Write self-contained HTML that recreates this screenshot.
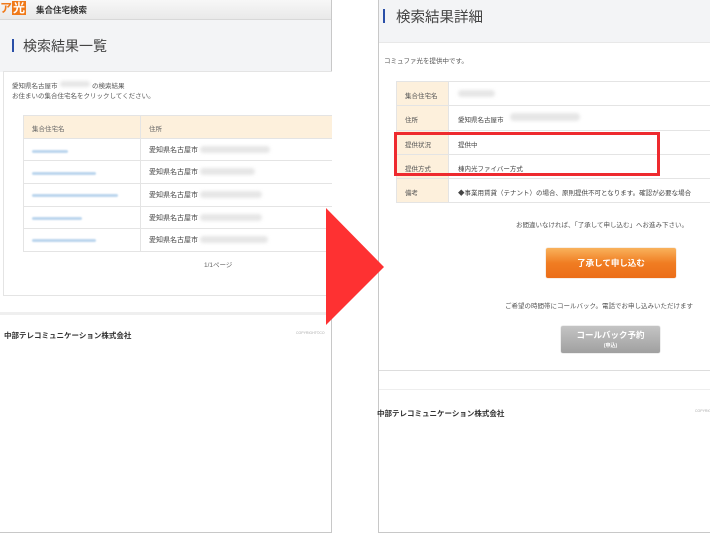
<!DOCTYPE html>
<html><head><meta charset="utf-8"><style>
*{margin:0;padding:0;box-sizing:border-box}
body{width:710px;height:533px;background:#fff;position:relative;overflow:hidden;font-family:"Liberation Sans","Noto Sans CJK JP",sans-serif;color:#333}
.a{position:absolute}
.t{position:absolute;white-space:nowrap}
.blur{position:absolute;background:#e6e6e6;border-radius:4px;filter:blur(1.5px)}
.link{position:absolute;height:3px;background:#bcd6ee;border-radius:2px;filter:blur(.8px)}
</style></head><body>
<!-- LEFT PANEL -->
<div class="a" style="left:0;top:0;width:332px;height:533px;border-right:1px solid #c8c8c8;border-bottom:1px solid #c8c8c8;background:#fff"></div>
<div class="a" style="left:0;top:0;width:331px;height:20px;background:linear-gradient(#f7f7f7,#e9e9e9);border-bottom:1px solid #d8d8d8"></div>
<div class="t" style="left:0;top:1px;font-size:12px;font-weight:bold;color:#f07a1a;line-height:14px">ア<span style="background:#f07a1a;color:#fff;padding:0 1px">光</span></div>
<div class="t" style="left:36px;top:4px;font-size:8.5px;font-weight:bold;color:#333">集合住宅検索</div>
<div class="a" style="left:0;top:20px;width:331px;height:52px;background:#f3f4f6"></div>
<div class="a" style="left:12px;top:39px;width:2px;height:13px;background:#2a4fa8"></div>
<div class="t" style="left:23px;top:36px;font-size:14px;color:#444">検索結果一覧</div>
<div class="a" style="left:3px;top:71px;width:329px;height:225px;background:#fff;border:1px solid #e4e4e4;border-right:none"></div>
<div class="t" style="left:12px;top:80px;font-size:6.5px;color:#555">愛知県名古屋市</div>
<div class="blur" style="left:60px;top:81px;width:30px;height:6px"></div>
<div class="t" style="left:92px;top:80px;font-size:6.5px;color:#555">の検索結果</div>
<div class="t" style="left:12px;top:90px;font-size:6.5px;color:#555">お住まいの集合住宅名をクリックしてください。</div>
<div class="a" style="left:23px;top:115px;width:309px;height:137px;border:1px solid #e4e4e4;border-right:none"></div>
<div class="a" style="left:24px;top:116px;width:308px;height:22px;background:#fdf0dc"></div>
<div class="a" style="left:140px;top:116px;width:1px;height:135px;background:#e4e4e4"></div>
<div class="t" style="left:32px;top:123px;font-size:6.5px;color:#666">集合住宅名</div>
<div class="t" style="left:149px;top:123px;font-size:6.5px;color:#666">住所</div>
<div class="a" style="left:24px;top:138px;width:308px;height:1px;background:#e4e4e4"></div>
<div class="a" style="left:24px;top:160px;width:308px;height:1px;background:#e4e4e4"></div>
<div class="a" style="left:24px;top:183px;width:308px;height:1px;background:#e4e4e4"></div>
<div class="a" style="left:24px;top:206px;width:308px;height:1px;background:#e4e4e4"></div>
<div class="a" style="left:24px;top:228px;width:308px;height:1px;background:#e4e4e4"></div>
<div class="link" style="left:32px;top:150px;width:36px"></div>
<div class="link" style="left:32px;top:172px;width:64px"></div>
<div class="link" style="left:32px;top:194px;width:86px"></div>
<div class="link" style="left:32px;top:217px;width:50px"></div>
<div class="link" style="left:32px;top:239px;width:64px"></div>
<div class="t" style="left:149px;top:145px;font-size:7px;color:#444">愛知県名古屋市</div><div class="blur" style="left:200px;top:146px;width:70px;height:7px"></div>
<div class="t" style="left:149px;top:167px;font-size:7px;color:#444">愛知県名古屋市</div><div class="blur" style="left:200px;top:168px;width:55px;height:7px"></div>
<div class="t" style="left:149px;top:190px;font-size:7px;color:#444">愛知県名古屋市</div><div class="blur" style="left:200px;top:191px;width:62px;height:7px"></div>
<div class="t" style="left:149px;top:213px;font-size:7px;color:#444">愛知県名古屋市</div><div class="blur" style="left:200px;top:214px;width:62px;height:7px"></div>
<div class="t" style="left:149px;top:235px;font-size:7px;color:#444">愛知県名古屋市</div><div class="blur" style="left:200px;top:236px;width:68px;height:7px"></div>
<div class="t" style="left:204px;top:259px;font-size:6.5px;color:#666">1/1ページ</div>
<div class="a" style="left:0;top:312px;width:331px;height:3px;background:#efefef"></div>
<div class="t" style="left:4px;top:330px;font-size:7.5px;font-weight:bold;color:#333">中部テレコミュニケーション株式会社</div>
<div class="t" style="left:296px;top:331px;font-size:3.5px;color:#aaa">COPYRIGHT©CO</div>

<!-- RIGHT PANEL -->
<div class="a" style="left:378px;top:0;width:332px;height:533px;border-left:1px solid #c8c8c8;border-bottom:1px solid #c8c8c8;background:#fff"></div>
<div class="a" style="left:379px;top:0;width:331px;height:43px;background:#f3f4f6;border-bottom:1px solid #e8e8e8"></div>
<div class="a" style="left:383px;top:9px;width:2px;height:14px;background:#2a4fa8"></div>
<div class="t" style="left:396px;top:6px;font-size:14.5px;color:#444">検索結果詳細</div>
<div class="t" style="left:384px;top:55px;font-size:6.5px;color:#555">コミュファ光を提供中です。</div>
<div class="a" style="left:396px;top:81px;width:314px;height:122px;border:1px solid #e4e4e4;border-right:none"></div>
<div class="a" style="left:397px;top:82px;width:52px;height:120px;background:#fdf0dc;border-right:1px solid #e4e4e4"></div>
<div class="a" style="left:397px;top:105px;width:313px;height:1px;background:#e4e4e4"></div>
<div class="a" style="left:397px;top:130px;width:313px;height:1px;background:#e4e4e4"></div>
<div class="a" style="left:397px;top:154px;width:313px;height:1px;background:#e4e4e4"></div>
<div class="a" style="left:397px;top:178px;width:313px;height:1px;background:#e4e4e4"></div>
<div class="t" style="left:405px;top:90px;font-size:6.5px;color:#555">集合住宅名</div>
<div class="blur" style="left:458px;top:90px;width:37px;height:7px"></div>
<div class="t" style="left:405px;top:114px;font-size:6.5px;color:#555">住所</div>
<div class="t" style="left:458px;top:114px;font-size:6.5px;color:#444">愛知県名古屋市</div><div class="blur" style="left:510px;top:113px;width:70px;height:8px"></div>
<div class="t" style="left:405px;top:139px;font-size:6.5px;color:#555">提供状況</div>
<div class="t" style="left:458px;top:139px;font-size:6.5px;color:#444">提供中</div>
<div class="t" style="left:405px;top:163px;font-size:6.5px;color:#555">提供方式</div>
<div class="t" style="left:458px;top:163px;font-size:6.5px;color:#444">棟内光ファイバー方式</div>
<div class="t" style="left:405px;top:187px;font-size:6.5px;color:#555">備考</div>
<div class="t" style="left:458px;top:187px;font-size:6.5px;color:#444">◆事業用賃貸（テナント）の場合、原則提供不可となります。確認が必要な場合</div>
<div class="a" style="left:394px;top:132px;width:266px;height:44px;border:3px solid #ee2a2f"></div>
<div class="t" style="left:516px;top:219px;font-size:6.5px;color:#555">お間違いなければ、「了承して申し込む」へお進み下さい。</div>
<div class="a" style="left:546px;top:248px;width:130px;height:30px;border-radius:2px;background:linear-gradient(#f9b25c,#f07d22 50%,#ec6d18);box-shadow:0 0 1px #c96;"></div>
<div class="t" style="left:546px;top:257px;width:130px;text-align:center;font-size:8.5px;color:#fff;font-weight:bold">了承して申し込む</div>
<div class="t" style="left:505px;top:300px;font-size:6.5px;color:#555">ご希望の時間帯にコールバック。電話でお申し込みいただけます</div>
<div class="a" style="left:561px;top:326px;width:99px;height:27px;border-radius:2px;background:linear-gradient(#c4c4c4,#a0a0a0);box-shadow:0 0 1px #999"></div>
<div class="t" style="left:561px;top:329px;width:99px;text-align:center;font-size:8.5px;color:#fff;font-weight:bold">コールバック予約</div>
<div class="t" style="left:561px;top:342px;width:99px;text-align:center;font-size:5px;color:#fff;font-weight:bold">(申込)</div>
<div class="a" style="left:379px;top:370px;width:331px;height:1px;background:#ddd"></div>
<div class="a" style="left:379px;top:389px;width:331px;height:1px;background:#eee"></div>
<div class="t" style="left:377px;top:408px;font-size:7.5px;font-weight:bold;color:#333">中部テレコミュニケーション株式会社</div>
<div class="t" style="left:695px;top:409px;font-size:3.5px;color:#aaa">COPYRIGHT</div>

<!-- ARROW -->
<svg class="a" style="left:0;top:0" width="710" height="533"><polygon points="326,208 384,267 326,325" fill="#fe3132"/></svg>
</body></html>
